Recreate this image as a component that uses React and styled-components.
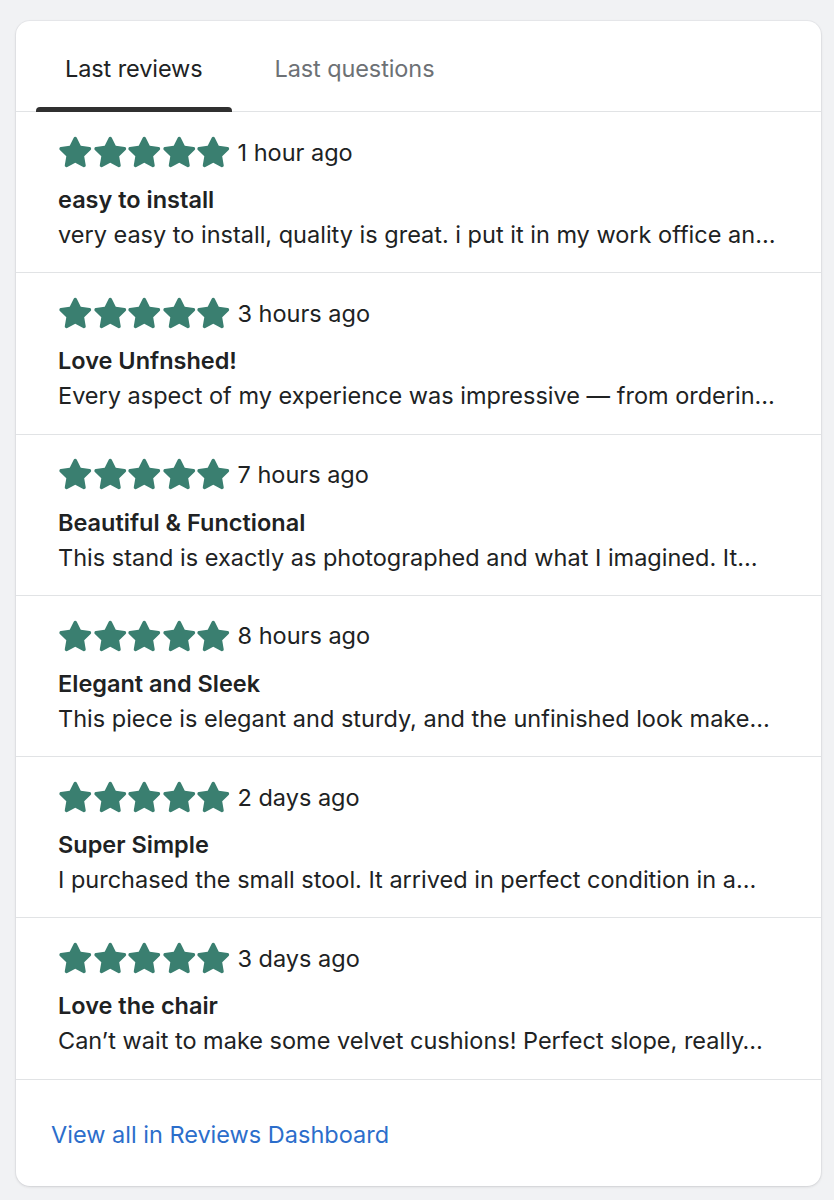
import React, { useState } from 'react'
import styled, { createGlobalStyle } from 'styled-components'

const GlobalStyle = createGlobalStyle`
  body {
    margin: 0;
    background: #f1f2f4;
    font-family: Inter, "Noto Sans", "Liberation Sans", sans-serif;
    color: #202223;
  }
`

const Page = styled.div`
  padding: 21px 13px 16px 16px;
`

const Card = styled.div`
  background: #fff;
  border-radius: 14px;
  box-shadow: 0 1px 3px rgba(23, 24, 24, 0.12), 0 0 0 1px rgba(63, 63, 68, 0.04);
  overflow: hidden;
`

const TabBar = styled.div`
  display: flex;
  gap: 14px;
  padding-left: 20px;
  height: 90px;
  border-bottom: 1px solid #e1e3e5;
`

const Tab = styled.button`
  position: relative;
  border: none;
  background: none;
  padding: 0 29px;
  font-family: inherit;
  font-size: 23.5px;
  letter-spacing: -0.1px;
  color: ${(p) => (p.$active ? '#202223' : '#6d7175')};
  cursor: pointer;
  display: flex;
  align-items: center;
  padding-top: 4px;

  &::after {
    content: '';
    position: absolute;
    left: 0;
    right: 0;
    bottom: -1px;
    height: 5px;
    border-radius: 4px 4px 0 0;
    background: ${(p) => (p.$active ? '#303030' : 'transparent')};
  }
`

const Row = styled.div`
  padding: 23px 42px 23.3px 42px;
  border-bottom: 1px solid #e1e3e5;
`

const Meta = styled.div`
  display: flex;
  align-items: center;
  height: 34px;
`

const Stars = styled.div`
  display: flex;
  margin-right: 7px;
`

const Ago = styled.span`
  font-size: 23.5px;
  color: #202223;
`

const Title = styled.div`
  font-size: 23.5px;
  font-weight: 600;
  margin-top: 16px;
  line-height: 30px;
`

const Body = styled.div`
  font-size: 23.5px;
  line-height: 30px;
  margin-top: 5px;
  margin-bottom: -1px;
  white-space: nowrap;
  overflow: hidden;
  text-overflow: ellipsis;
`

const Footer = styled.div`
  height: 106px;
  display: flex;
  align-items: center;
  padding-left: 35px;
`

const Link = styled.a`
  font-size: 23.5px;
  color: #2c6ecb;
  text-decoration: none;
  padding-top: 4px;
`

const Star = () => (
  <svg width='34.5' height='34.5' viewBox='0 0 20 20'>
    <path
      fill='#3a7f70'
      d='M10 1a1 1 0 0 1 .897.557l2.308 4.676 5.161.75a1 1 0 0 1 .554 1.706l-3.734 3.64.881 5.14a1 1 0 0 1-1.451 1.054L10 16.096l-4.616 2.427a1 1 0 0 1-1.451-1.054l.881-5.14-3.734-3.64a1 1 0 0 1 .554-1.706l5.16-.75L9.104 1.557A1 1 0 0 1 10 1z'
    />
  </svg>
)

const reviews = [
  { ago: '1 hour ago', title: 'easy to install', body: 'very easy to install, quality is great. i put it in my work office an…' },
  { ago: '3 hours ago', title: 'Love Unfnshed!', body: 'Every aspect of my experience was impressive — from orderin…' },
  { ago: '7 hours ago', title: 'Beautiful & Functional', body: 'This stand is exactly as photographed and what I imagined. It…' },
  { ago: '8 hours ago', title: 'Elegant and Sleek', body: 'This piece is elegant and sturdy, and the unfinished look make…' },
  { ago: '2 days ago', title: 'Super Simple', body: 'I purchased the small stool. It arrived in perfect condition in a…' },
  { ago: '3 days ago', title: 'Love the chair', body: 'Can’t wait to make some velvet cushions! Perfect slope, really…' }
]

function App() {
  const [tab, setTab] = useState(0)

  return (
    <>
      <GlobalStyle />
      <Page>
        <Card>
          <TabBar>
            <Tab $active={tab === 0} onClick={() => setTab(0)}>Last reviews</Tab>
            <Tab $active={tab === 1} onClick={() => setTab(1)}>Last questions</Tab>
          </TabBar>
          {reviews.map((r, i) => (
            <Row key={i}>
              <Meta>
                <Stars>
                  {[0, 1, 2, 3, 4].map((s) => <Star key={s} />)}
                </Stars>
                <Ago>{r.ago}</Ago>
              </Meta>
              <Title>{r.title}</Title>
              <Body>{r.body}</Body>
            </Row>
          ))}
          <Footer>
            <Link href='#'>View all in Reviews Dashboard</Link>
          </Footer>
        </Card>
      </Page>
    </>
  )
}

export default App
